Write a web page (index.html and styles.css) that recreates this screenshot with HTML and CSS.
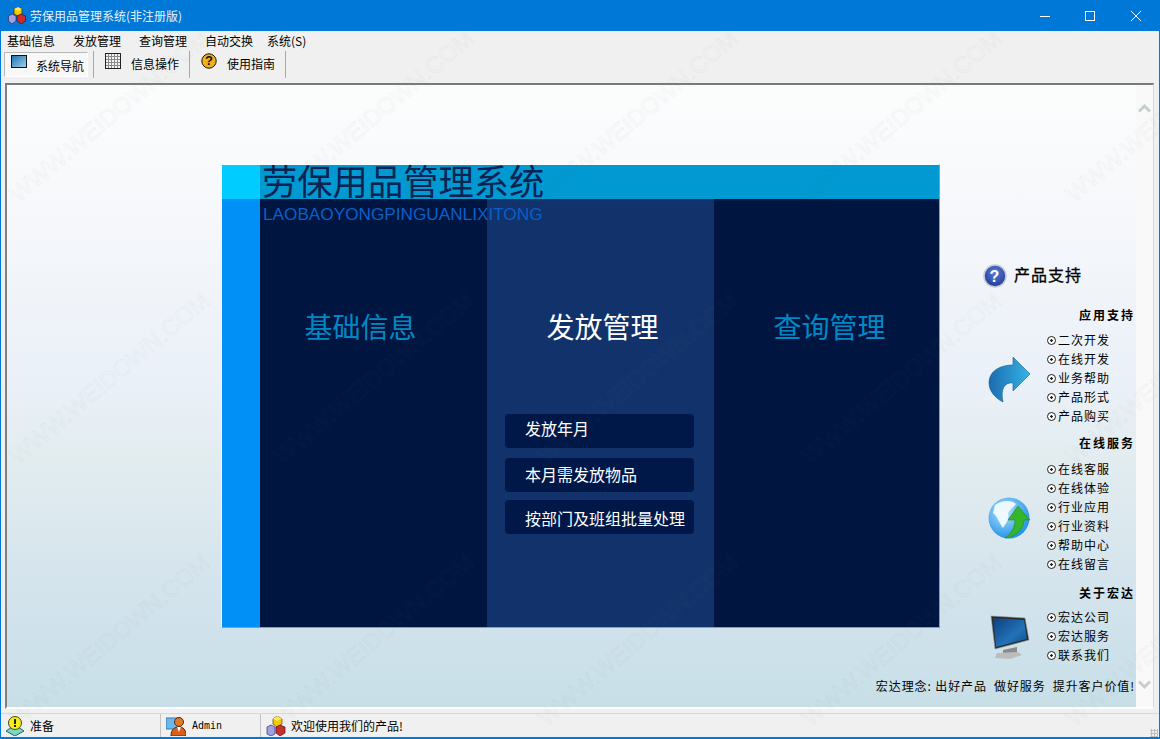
FILE: index.html
```html
<!DOCTYPE html>
<html lang="zh">
<head>
<meta charset="utf-8">
<title>劳保用品管理系统</title>
<link rel="stylesheet" href="styles.css">
</head>
<body>
<div class="window">
  <header class="titlebar">
    <svg class="app-icon" viewBox="0 0 18 17" width="18" height="17"><polygon points="10,0 14,2 14,7 10,9 6,7 6,2" fill="#f6c800" stroke="#3a2a00" stroke-width=".7"/><polygon points="10,0 14,2 10,4 6,2" fill="#ffe860"/><polygon points="4,7 8,9 8,14 4,17 0.5,14 0.5,9" fill="#a0a0e8" stroke="#30305a" stroke-width=".7"/><polygon points="13,7 17.5,9 17.5,14 13,17 9,14 9,9" fill="#c82c2c" stroke="#401010" stroke-width=".7"/></svg>
    <span class="title-text">劳保用品管理系统(非注册版)</span>
    <div class="win-controls">
      <svg viewBox="0 0 46 30" width="46" height="30"><rect x="19" y="15" width="10" height="1" fill="#fff"/></svg>
      <svg viewBox="0 0 46 30" width="46" height="30"><rect x="18.5" y="10.5" width="9" height="9" fill="none" stroke="#fff"/></svg>
      <svg viewBox="0 0 46 30" width="46" height="30"><path d="M18 10 L28 20 M28 10 L18 20" stroke="#fff" fill="none"/></svg>
    </div>
  </header>

  <nav class="menubar">
    <span class="menu-item">基础信息</span>
    <span class="menu-item">发放管理</span>
    <span class="menu-item">查询管理</span>
    <span class="menu-item">自动交换</span>
    <span class="menu-item menu-last">系统(S)</span>
  </nav>

  <div class="toolbar">
    <div class="tool tool-active">
      <svg viewBox="0 0 16 14" width="16" height="14"><defs><linearGradient id="scr" x1="0" x2="1" y1="0" y2="1"><stop offset="0" stop-color="#1c6fb0"/><stop offset="1" stop-color="#9fd3ea"/></linearGradient></defs><rect x=".5" y=".5" width="15" height="12" fill="url(#scr)" stroke="#111"/></svg>
      <span>系统导航</span>
    </div>
    <div class="tool-sep"></div>
    <div class="tool tool-plain">
      <svg viewBox="0 0 16 16" width="16" height="16"><rect x=".5" y=".5" width="15" height="15" fill="#f4f4f4" stroke="#222"/><path d="M3.5 1V15M6.5 1V15M9.5 1V15M12.5 1V15M1 3.5H15M1 6.5H15M1 9.5H15M1 12.5H15" stroke="#8a8a8a" stroke-width="1"/></svg>
      <span>信息操作</span>
    </div>
    <div class="tool-sep"></div>
    <div class="tool tool-plain">
      <svg viewBox="0 0 16 16" width="16" height="16"><circle cx="8" cy="8" r="7.2" fill="#f3b21a" stroke="#1a1200"/><text x="8" y="12.3" class="q-mark">?</text></svg>
      <span>使用指南</span>
    </div>
    <div class="tool-sep"></div>
  </div>

  <main class="frame">
    <div class="panel">
      <section class="banner">
        <div class="banner-top">
          <div class="banner-corner"></div>
          <h1 class="banner-title">劳保用品管理系统</h1>
        </div>
        <div class="banner-body">
          <div class="banner-side"></div>
          <div class="col col-dark col-a"><h2 class="col-title title-a">基础信息</h2></div>
          <div class="col col-mid">
            <h2 class="col-title title-b">发放管理</h2>
            <div class="btn-list">
              <div class="btn btn-1">发放年月</div>
              <div class="btn btn-2">本月需发放物品</div>
              <div class="btn btn-3">按部门及班组批量处理</div>
            </div>
          </div>
          <div class="col col-dark col-c"><h2 class="col-title title-c">查询管理</h2></div>
        </div>
        <div class="banner-en">LAOBAOYONGPINGUANLIXITONG</div>
      </section>

      <aside class="support">
        <div class="support-head">
          <svg viewBox="0 0 24 24" width="24" height="24"><defs><radialGradient id="qb" cx=".5" cy=".35" r=".7"><stop offset="0" stop-color="#5b7ed8"/><stop offset="1" stop-color="#1c3590"/></radialGradient></defs><circle cx="12" cy="12" r="11" fill="url(#qb)" stroke="#c8ccd8" stroke-width="1.6"/><text x="12" y="17.5" class="q-white">?</text></svg>
          <span class="support-label">产品支持</span>
        </div>

        <h3 class="sup-title">应用支持</h3>
        <div class="sup-group">
          <svg class="sup-icon" viewBox="0 0 44 46" width="44" height="46"><defs><linearGradient id="arw" x1="0" x2="1" y1="0" y2="0"><stop offset="0" stop-color="#1a6cae"/><stop offset="1" stop-color="#35b4e6"/></linearGradient></defs><path d="M1 26 C1 14 12 8 25 8 L25 0 L42 17 L25 34 L25 26 C18 25 12 30 15 45 C7 41 1 34 1 26 Z" fill="url(#arw)" stroke="#1a5a90" stroke-width=".6"/></svg>
          <ul class="links">
            <li>二次开发</li><li>在线开发</li><li>业务帮助</li><li>产品形式</li><li>产品购买</li>
          </ul>
        </div>

        <h3 class="sup-title sup-title-b">在线服务</h3>
        <div class="sup-group sup-group-b">
          <svg class="sup-icon" viewBox="0 0 44 44" width="44" height="44"><defs><radialGradient id="glb" cx=".4" cy=".35" r=".7"><stop offset="0" stop-color="#b8e4fc"/><stop offset="1" stop-color="#1c8ee8"/></radialGradient></defs><circle cx="21" cy="21" r="20.5" fill="url(#glb)"/><path d="M7 8 C14 3 24 3 28 7 C24 12 22 12 20 16 C22 22 18 26 15 31 C11 26 10 20 5 16 Z" fill="#eef8ff"/><path d="M30 9 L42 23 L36 23 C36 32 28 40 17 41 C24 36 27 30 27 23 L20 23 Z" fill="#35b52a" stroke="#1f8a1e" stroke-width=".6"/></svg>
          <ul class="links">
            <li>在线客服</li><li>在线体验</li><li>行业应用</li><li>行业资料</li><li>帮助中心</li><li>在线留言</li>
          </ul>
        </div>

        <h3 class="sup-title sup-title-c">关于宏达</h3>
        <div class="sup-group sup-group-c">
          <svg class="sup-icon" viewBox="-2 0 44 46" width="44" height="46"><defs><linearGradient id="mon" x1="0" x2="1" y1="0" y2="1"><stop offset="0" stop-color="#0e3f7c"/><stop offset=".6" stop-color="#2272b8"/><stop offset="1" stop-color="#0f4a86"/></linearGradient></defs><polygon points="1,1 35,3 39,25 5,34" fill="#2a2a2a" stroke="#999" stroke-width=".6"/><polygon points="3,3 34,5 37,24 6,32" fill="url(#mon)"/><polygon points="13,35 27,32 27,38 13,38" fill="#8a8a8a"/><polygon points="5,43 7,38 28,37 32,40 20,44" fill="#bcbcbc"/></svg>
          <ul class="links">
            <li>宏达公司</li><li>宏达服务</li><li>联系我们</li>
          </ul>
        </div>

        <p class="motto">宏达理念: 出好产品&nbsp; 做好服务&nbsp; 提升客户价值!</p>
      </aside>
    </div>
    <div class="scroll-strip">
      <svg viewBox="0 0 13 10" width="13" height="10"><path d="M1 8.5 L6.5 3 L12 8.5" fill="none" stroke="#c8cdd0" stroke-width="3"/></svg>
      <svg viewBox="0 0 13 10" width="13" height="10"><path d="M1 1.5 L6.5 7 L12 1.5" fill="none" stroke="#c8cdd0" stroke-width="3"/></svg>
    </div>
  </main>

  <footer class="statusbar">
    <div class="stat stat-a">
      <svg viewBox="0 0 20 20" width="20" height="20"><polygon points="10,9 19,15 10,20 1,15" fill="#7fd4c4" stroke="#1a6a60"/><circle cx="10" cy="7" r="6.5" fill="#f2ee20" stroke="#4a4a10"/><rect x="9" y="3" width="2" height="5" fill="#222"/><rect x="9" y="9" width="2" height="2" fill="#222"/></svg>
      <span>准备</span>
    </div>
    <div class="stat stat-b">
      <svg viewBox="0 0 20 20" width="20" height="20"><rect x="0" y="2" width="14" height="11" fill="#6cb6ec" stroke="#3a78b0"/><circle cx="13" cy="6" r="4.5" fill="#e07a28" stroke="#5a2a08"/><path d="M5 20 C5 13 9 11 13 11 C17 11 20 13 20 20 Z" fill="#d9601c" stroke="#5a2a08"/><path d="M11 11 L13 16 L15 11 Z" fill="#fff"/></svg>
      <span class="admin">Admin</span>
    </div>
    <div class="stat stat-c">
      <svg viewBox="0 0 20 20" width="20" height="20"><polygon points="11,0 16,3 16,8 11,11 7,8 7,3" fill="#f6c800" stroke="#5a4000" stroke-width=".7"/><polygon points="11,0 16,3 11,5 7,3" fill="#ffe860"/><polygon points="5,9 9,11 9,18 5,20 1,18 1,11" fill="#a0a0e8" stroke="#30305a" stroke-width=".7"/><polygon points="14,9 19,11 19,17 14,20 10,17 10,11" fill="#c83030" stroke="#501010" stroke-width=".7"/></svg>
      <span>欢迎使用我们的产品!</span>
    </div>
    <div class="grip"></div>
  </footer>

  <div class="watermark" aria-hidden="true">
    <span>WWW.WEIDOWN.COM</span><span>WWW.WEIDOWN.COM</span><span>WWW.WEIDOWN.COM</span><span>WWW.WEIDOWN.COM</span><span>WWW.WEIDOWN.COM</span>
    <span>WWW.WEIDOWN.COM</span><span>WWW.WEIDOWN.COM</span><span>WWW.WEIDOWN.COM</span><span>WWW.WEIDOWN.COM</span><span>WWW.WEIDOWN.COM</span>
    <span>WWW.WEIDOWN.COM</span><span>WWW.WEIDOWN.COM</span><span>WWW.WEIDOWN.COM</span><span>WWW.WEIDOWN.COM</span><span>WWW.WEIDOWN.COM</span>
  </div>
</div>
</body>
</html>
```
FILE: styles.css
```css
* { box-sizing: border-box; }
html, body { margin: 0; padding: 0; }
body {
  width: 1160px;
  height: 739px;
  overflow: hidden;
  font-family: "Noto Sans CJK SC", "Liberation Sans", sans-serif;
  font-size: 12px;
  color: #000;
}
h1, h2, h3, p, ul { margin: 0; padding: 0; font-weight: normal; }
ul { list-style: none; }

.window {
  position: relative;
  width: 1160px;
  height: 739px;
  display: flex;
  flex-direction: column;
  background: #f0f0f0;
  border: 1px solid #0078d7;
  border-top: 0;
  border-bottom-width: 2px;
  overflow: hidden;
}

/* title bar */
.titlebar {
  height: 31px;
  flex: none;
  display: flex;
  align-items: center;
  background: #0078d7;
  color: #fff;
  padding-left: 7px;
}
.app-icon { flex: none; margin-right: 4px; }
.title-text { font-size: 12px; color: #e6f2fb; }
.win-controls { margin-left: auto; display: flex; }
.win-controls svg { display: block; }

/* menu */
.menubar {
  height: 20px;
  flex: none;
  display: flex;
  align-items: center;
  padding-left: 6px;
}
.menu-item { margin-right: 18px; line-height: 20px; }
.menu-item:nth-child(4) { margin-right: 14px; }
.menu-last { margin-right: 0; }

/* toolbar */
.toolbar {
  height: 27px;
  flex: none;
  display: flex;
  align-items: stretch;
  padding-left: 3px;
}
.tool {
  display: flex;
  align-items: flex-start;
  padding-top: 2px;
}
.tool span { line-height: 20px; margin-top: 1px; }
.tool-active {
  width: 84px;
  height: 25px;
  margin-top: 1px;
  padding-left: 6px;
  background: #f8f8f8;
  border: 1px solid #b8b8b8;
  border-right-color: #fff;
  border-bottom-color: #fff;
}
.tool-active svg { margin-right: 9px; }
.tool-plain { width: 90px; padding-left: 11px; }
.tool-plain svg { margin-right: 10px; }
.tool-sep {
  width: 1px;
  background: #a8a8a8;
  margin-left: 5px;
}
.q-mark { font: bold 13px "Liberation Sans", sans-serif; text-anchor: middle; fill: #111; }
.q-white { font: bold 16px "Liberation Sans", sans-serif; text-anchor: middle; fill: #fff; }

/* client frame */
.frame {
  margin: 5px 5px 0 4px;
  height: 626px;
  flex: none;
  display: flex;
  border-top: 2px solid #7a7a7a;
  border-left: 2px solid #808080;
  border-right: 1px solid #d8d8d8;
  border-bottom: 2px solid #fff;
  background: #fff;
}
.panel {
  flex: 1;
  min-width: 0;
  display: flex;
  align-items: flex-start;
  padding: 79px 0 0 214px;
  background: linear-gradient(#fbfdfd 0%, #f6f8fb 20%, #eaf0f8 48%, #e3edf0 59%, #d2e3ec 83%, #c8dfe8 100%);
}
.scroll-strip {
  width: 17px;
  flex: none;
  background: #f9f9f9;
  display: flex;
  flex-direction: column;
  justify-content: space-between;
  align-items: flex-start;
  padding: 18px 0 17px 2px;
}
.scroll-strip svg { display: block; }

/* banner */
.banner {
  position: relative;
  width: 719px;
  height: 464px;
  flex: none;
  display: flex;
  flex-direction: column;
  border: 1px solid #fff;
  border-right-color: #9a9a9a;
  border-bottom-color: #9a9a9a;
}
.banner-top {
  height: 34px;
  flex: none;
  display: flex;
  background: #0099d2;
}
.banner-corner { width: 38px; background: #00ccff; flex: none; }
.banner-title {
  margin-left: 2px;
  font-size: 35.3px;
  line-height: 30px;
  height: 30px;
  color: #0a2352;
  white-space: nowrap;
}
.banner-body { flex: 1; display: flex; }
.banner-side { width: 38px; flex: none; background: #0090f6; }
.col { display: flex; flex-direction: column; align-items: center; width: 227px; flex: none; }
.col-c { flex: 1; width: auto; }
.col-dark { background: #001640; }
.col-mid { background: #12326b; }
.col-title {
  font-size: 28px;
  line-height: 40px;
  margin-top: 107px;
  color: #0088c6;
  white-space: nowrap;
}
.title-a { margin-right: 26px; }
.title-b { margin-left: 4px; color: #fff; }
.title-c { margin-left: 6px; }
.btn-list {
  align-self: stretch;
  display: flex;
  flex-direction: column;
  margin: 68px 20px 0 18px;
}
.btn {
  height: 34px;
  border-radius: 4px;
  background: #001848;
  color: #fff;
  font-size: 16px;
  padding-left: 20px;
  white-space: nowrap;
}
.btn-1 { line-height: 28px; }
.btn-2 { line-height: 32px; margin-top: 10px; }
.btn-3 { line-height: 36px; margin-top: 8px; }
.banner-en {
  position: absolute;
  left: 41px;
  top: 40px;
  font-family: "Liberation Sans", sans-serif;
  font-size: 17.2px;
  line-height: 18px;
  color: #0a5fc8;
  white-space: nowrap;
}

/* support */
.support {
  flex: 1;
  min-width: 0;
  margin-top: 100px;
  padding-right: 3px;
}
.support-head {
  display: flex;
  align-items: flex-start;
  height: 24px;
  padding-left: 43px;
  font-size: 16px;
  letter-spacing: 1px;
  -webkit-text-stroke: .3px #000;
  gap: 7px;
}
.support-head svg { flex: none; }
.support-label { line-height: 20px; }
.sup-title {
  font-size: 12px;
  text-align: right;
  font-weight: bold;
  line-height: 18px;
  letter-spacing: 2px;
  margin: 18px -2px 0 0;
}
.sup-title-b { margin-top: 9px; }
.sup-title-c { margin-top: 11px; }
.sup-group {
  display: flex;
  align-items: center;
  padding-left: 48px;
  margin-top: 6px;
}
.sup-group-b { margin-top: 7px; }
.sup-group-c { margin-top: 5px; }
.sup-icon { flex: none; margin: 5px 15px 0 0; }
.links li {
  position: relative;
  padding-left: 11px;
  line-height: 19px;
  letter-spacing: 1px;
  white-space: nowrap;
}
.links li::before {
  content: "";
  position: absolute;
  left: 0;
  top: 6px;
  width: 7px;
  height: 7px;
  border: 1px solid #222;
  border-radius: 50%;
  background: radial-gradient(circle, #222 1px, #fff 1.5px);
}
.motto {
  margin-top: 13px;
  display: flex;
  justify-content: flex-end;
  white-space: nowrap;
  line-height: 18px;
  letter-spacing: .9px;
  margin-right: -2px;
}

/* status bar */
.statusbar {
  margin-top: 4px;
  flex: 1;
  display: flex;
  align-items: center;
  border-top: 1px solid #d8d8d8;
  position: relative;
}
.stat {
  display: flex;
  align-items: center;
  height: 100%;
  padding-left: 4px;
  border-right: 1px solid #c4c4c4;
}
.stat-a { width: 160px; gap: 5px; }
.stat-b { width: 100px; gap: 6px; padding-left: 5px; }
.stat-c { border-right: 0; gap: 5px; padding-left: 5px; }
.admin { font-family: "DejaVu Sans Mono", monospace; font-size: 10px; }
.grip {
  position: absolute;
  right: 1px;
  bottom: 0;
  width: 8px;
  height: 8px;
  background: radial-gradient(circle, #bdbdbd 1px, transparent 1.2px) 0 0 / 3px 3px;
}

/* watermark */
.watermark {
  position: absolute;
  left: -23px;
  top: -15px;
  display: grid;
  grid-template-columns: repeat(5, 264px);
  grid-template-rows: repeat(3, 262px);
  place-items: center;
  pointer-events: none;
}
.watermark span {
  transform: rotate(-40deg);
  font-family: "Liberation Sans", sans-serif;
  font-size: 23.5px;
  white-space: nowrap;
  color: transparent;
  -webkit-text-stroke: 1px rgba(105, 115, 125, .07);
}
```
